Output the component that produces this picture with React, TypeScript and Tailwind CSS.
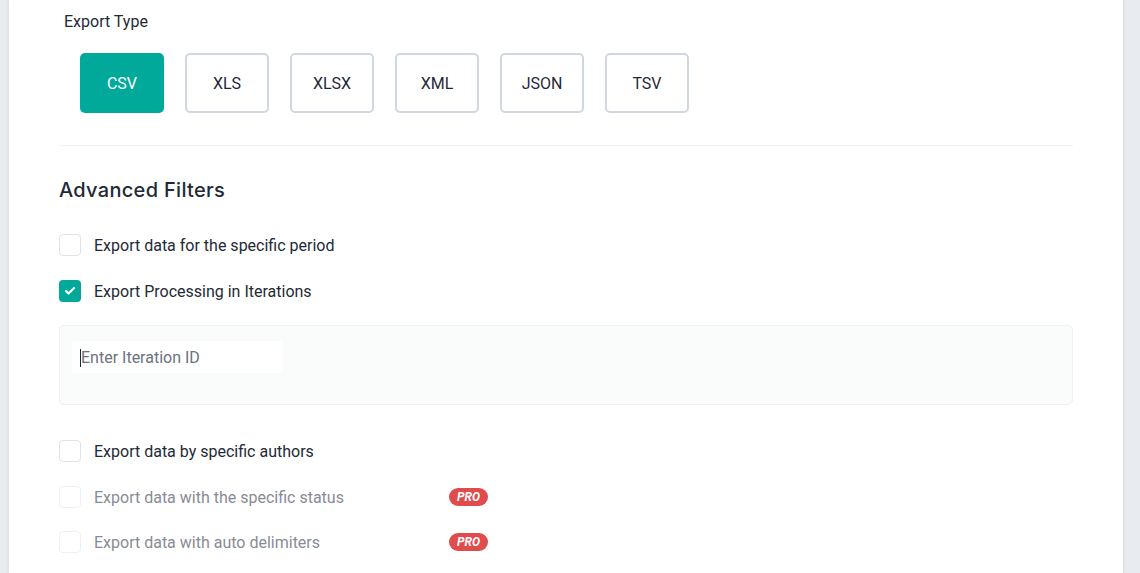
import React from "react";
import { Check } from "lucide-react";

const types = ["CSV", "XLS", "XLSX", "XML", "JSON", "TSV"];

const Box = ({ checked = false, disabled = false }: { checked?: boolean; disabled?: boolean }) =>
  checked ? (
    <span className="w-[22px] h-[22px] rounded-[4px] bg-[#00a99a] flex items-center justify-center shrink-0">
      <Check size={12} strokeWidth={4.5} className="text-white" />
    </span>
  ) : (
    <span
      className={`w-[22px] h-[22px] rounded-[4px] border bg-white shrink-0 ${
        disabled ? "border-[#eef0f3]" : "border-[#dfe2e7]"
      }`}
    />
  );

const Row = ({
  label,
  checked,
  disabled,
  pro,
  className = "",
}: {
  label: string;
  checked?: boolean;
  disabled?: boolean;
  pro?: boolean;
  className?: string;
}) => (
  <div className={`flex items-center h-[22px] ${className}`}>
    <Box checked={checked} disabled={disabled} />
    <span
      className={`ml-[13px] pt-[2px] text-[16px] leading-[22px] w-[355px] ${
        disabled ? "text-[#878c96]" : "text-[#1f2a37]"
      }`}
    >
      {label}
    </span>
    {pro && (
      <span className="h-[18px] px-[8px] rounded-full bg-[#e04b4b] text-white text-[12px] font-bold italic leading-[18px]">
        PRO
      </span>
    )}
  </div>
);

export default function App() {
  return (
    <div
      className="h-screen overflow-hidden bg-[#e8ebf0] flex pl-[9px] pr-[17px]"
      style={{ fontFamily: "Roboto, 'Liberation Sans', sans-serif" }}
    >
      <div className="flex-1 bg-white shadow-[0_0_3px_rgba(150,160,180,0.35)] px-[50px] pt-[12px]">
        <div className="pl-[5px] text-[16px] leading-5 text-[#1f2a37]">Export Type</div>
        <div className="mt-[21px] pl-[21px] flex gap-[21px]">
          {types.map((t, i) => (
            <div
              key={t}
              className={`w-[84px] h-[60px] rounded-[5px] flex items-center justify-center pt-[2px] text-[16px] ${
                i === 0
                  ? "bg-[#00a99a] text-white"
                  : "border-2 border-[#cfd7e1] text-[#1f2a37]"
              }`}
            >
              {t}
            </div>
          ))}
        </div>
        <div className="mt-[32px] h-px bg-[#f1f3f5]" />
        <h2
          className="mt-[30px] text-[20px] leading-[28px] font-medium tracking-[0.3px] text-[#1f2a37]"
          style={{ fontFamily: "Inter, 'Noto Sans', sans-serif" }}
        >
          Advanced Filters
        </h2>
        <Row className="mt-[30px]" label="Export data for the specific period" />
        <Row className="mt-[24px]" label="Export Processing in Iterations" checked />
        <div className="mt-[23px] h-[80px] rounded-[5px] border border-[#eef0f3] bg-[#fafbfb] pt-[15px] pl-[12px]">
          <div className="w-[211px] h-[32px] rounded-[4px] bg-white flex items-center pl-[8px] pt-[2px]">
            <span className="w-px h-[18px] bg-[#1f2a37]" />
            <span className="text-[16px] text-[#6b7280]">Enter Iteration ID</span>
          </div>
        </div>
        <Row className="mt-[35px]" label="Export data by specific authors" />
        <Row className="mt-[24px]" label="Export data with the specific status" disabled pro />
        <Row className="mt-[23px]" label="Export data with auto delimiters" disabled pro />
      </div>
    </div>
  );
}
